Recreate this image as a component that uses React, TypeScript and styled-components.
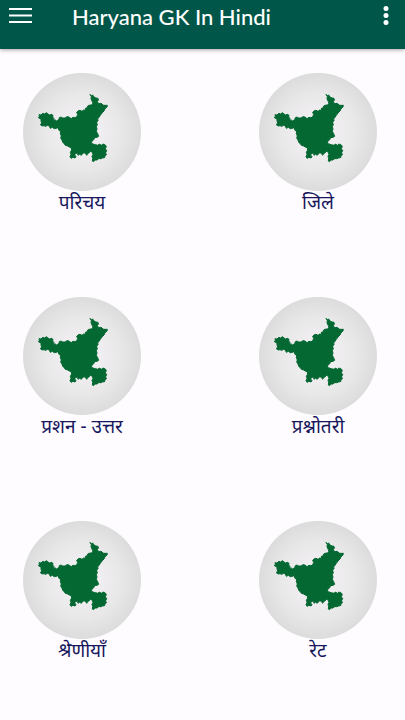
import React from 'react';
import styled, { createGlobalStyle } from 'styled-components';

const GlobalStyle = createGlobalStyle`
  * { box-sizing: border-box; }
  body {
    margin: 0;
    background: #fefcff;
    font-family: "Noto Sans", "Noto Sans Devanagari", Lato, sans-serif;
  }
`;

const Page = styled.div`
  display: flex;
  flex-direction: column;
  min-height: 100vh;
`;

const AppBar = styled.header`
  display: flex;
  align-items: flex-start;
  height: 49px;
  padding: 0 7px 0 8px;
  background: #005648;
  color: #fff;
  box-shadow: 0 1px 4px rgba(0, 0, 0, 0.35);
`;

const IconButton = styled.button`
  display: flex;
  align-items: center;
  justify-content: center;
  width: 24px;
  height: 32px;
  padding: 0;
  border: 0;
  background: none;
  color: inherit;
  cursor: pointer;
`;

const Title = styled.h1`
  flex: 1;
  margin: 0 0 0 40px;
  font-family: Lato, sans-serif;
  font-size: 22px;
  font-weight: 500;
  line-height: 34px;
  white-space: nowrap;
`;

const Topics = styled.main`
  display: grid;
  grid-template-columns: auto auto;
  justify-content: space-between;
  row-gap: 84px;
  padding: 24px 28px 24px 23px;
`;

const Topic = styled.button`
  display: flex;
  flex-direction: column;
  align-items: center;
  width: 118px;
  padding: 0;
  border: 0;
  background: none;
  color: #17175c;
  font: inherit;
  cursor: pointer;
`;

const Disc = styled.span`
  display: block;
  width: 118px;
  height: 118px;
  border-radius: 50%;
  background: radial-gradient(circle closest-side, #f0eef0 30%, #e9e8e9 65%, #dcdcdc 100%);
`;

const Label = styled.span`
  height: 22px;
  font-size: 19px;
  line-height: 22px;
  white-space: nowrap;
`;

const HaryanaMap = () => (
  <svg width="118" height="118" viewBox="24 22 354 354" aria-hidden="true">
    <path
      fill="#036831"
      stroke="#036831"
      strokeWidth="3"
      strokeLinejoin="round"
      d="M225 86L229 90L233 88L237 94L243 97L249 98L250 103L247 108L251 114L258 113L266 119L277 119L276 124L270 129L267 136L261 142L256 149L252 155L248 160L249 165L245 170L247 177L244 183L246 190L244 197L248 204L251 212L246 215L239 216L236 222L231 227L229 233L234 235L241 237L249 239L253 235L259 239L264 235L271 238L274 243L271 249L275 255L272 261L274 268L269 272L270 275L263 277L257 279L251 279L246 283L239 283L236 288L232 286L233 278L231 272L234 266L231 259L227 256L223 261L219 263L215 269L211 263L206 261L202 266L198 269L194 265L190 269L186 263L182 262L179 268L183 273L180 277L174 275L168 278L165 273L168 266L166 260L170 253L169 247L163 244L158 241L151 239L148 234L143 230L141 223L137 217L139 211L136 204L137 198L131 193L130 186L123 188L118 189L112 185L106 188L103 181L98 179L92 182L87 180L81 181L76 177L80 172L78 166L78 160L70 156L73 152L72 147L78 148L84 143L89 145L94 141L99 145L104 148L109 146L114 149L113 154L117 159L116 164L121 163L125 166L131 162L133 156L138 154L143 157L150 157L156 153L162 154L168 159L174 155L180 156L185 153L188 147L185 140L190 135L195 134L201 137L206 133L212 134L211 128L217 126L218 121L225 118L231 118L234 112L231 106L228 99L229 93Z"
    />
  </svg>
);

const topics = ['परिचय', 'जिले', 'प्रशन - उत्तर', 'प्रश्नोतरी', 'श्रेणीयाँ', 'रेट'];

export default function App() {
  return (
    <Page>
      <GlobalStyle />
      <AppBar>
        <IconButton aria-label="Menu">
          <svg width="24" height="32" viewBox="0 0 24 32" aria-hidden="true">
            <path d="M1 9h23M1 15.500h23M1 22h23" stroke="currentColor" strokeWidth="2" />
          </svg>
        </IconButton>
        <Title>Haryana GK In Hindi</Title>
        <IconButton aria-label="More options">
          <svg width="24" height="32" viewBox="0 0 24 32" fill="currentColor" aria-hidden="true">
            <circle cx="12" cy="8.500" r="2.500" />
            <circle cx="12" cy="15.500" r="2.500" />
            <circle cx="12" cy="22.500" r="2.500" />
          </svg>
        </IconButton>
      </AppBar>
      <Topics>
        {topics.map((topic) => (
          <Topic key={topic}>
            <Disc>
              <HaryanaMap />
            </Disc>
            <Label>{topic}</Label>
          </Topic>
        ))}
      </Topics>
    </Page>
  );
}
